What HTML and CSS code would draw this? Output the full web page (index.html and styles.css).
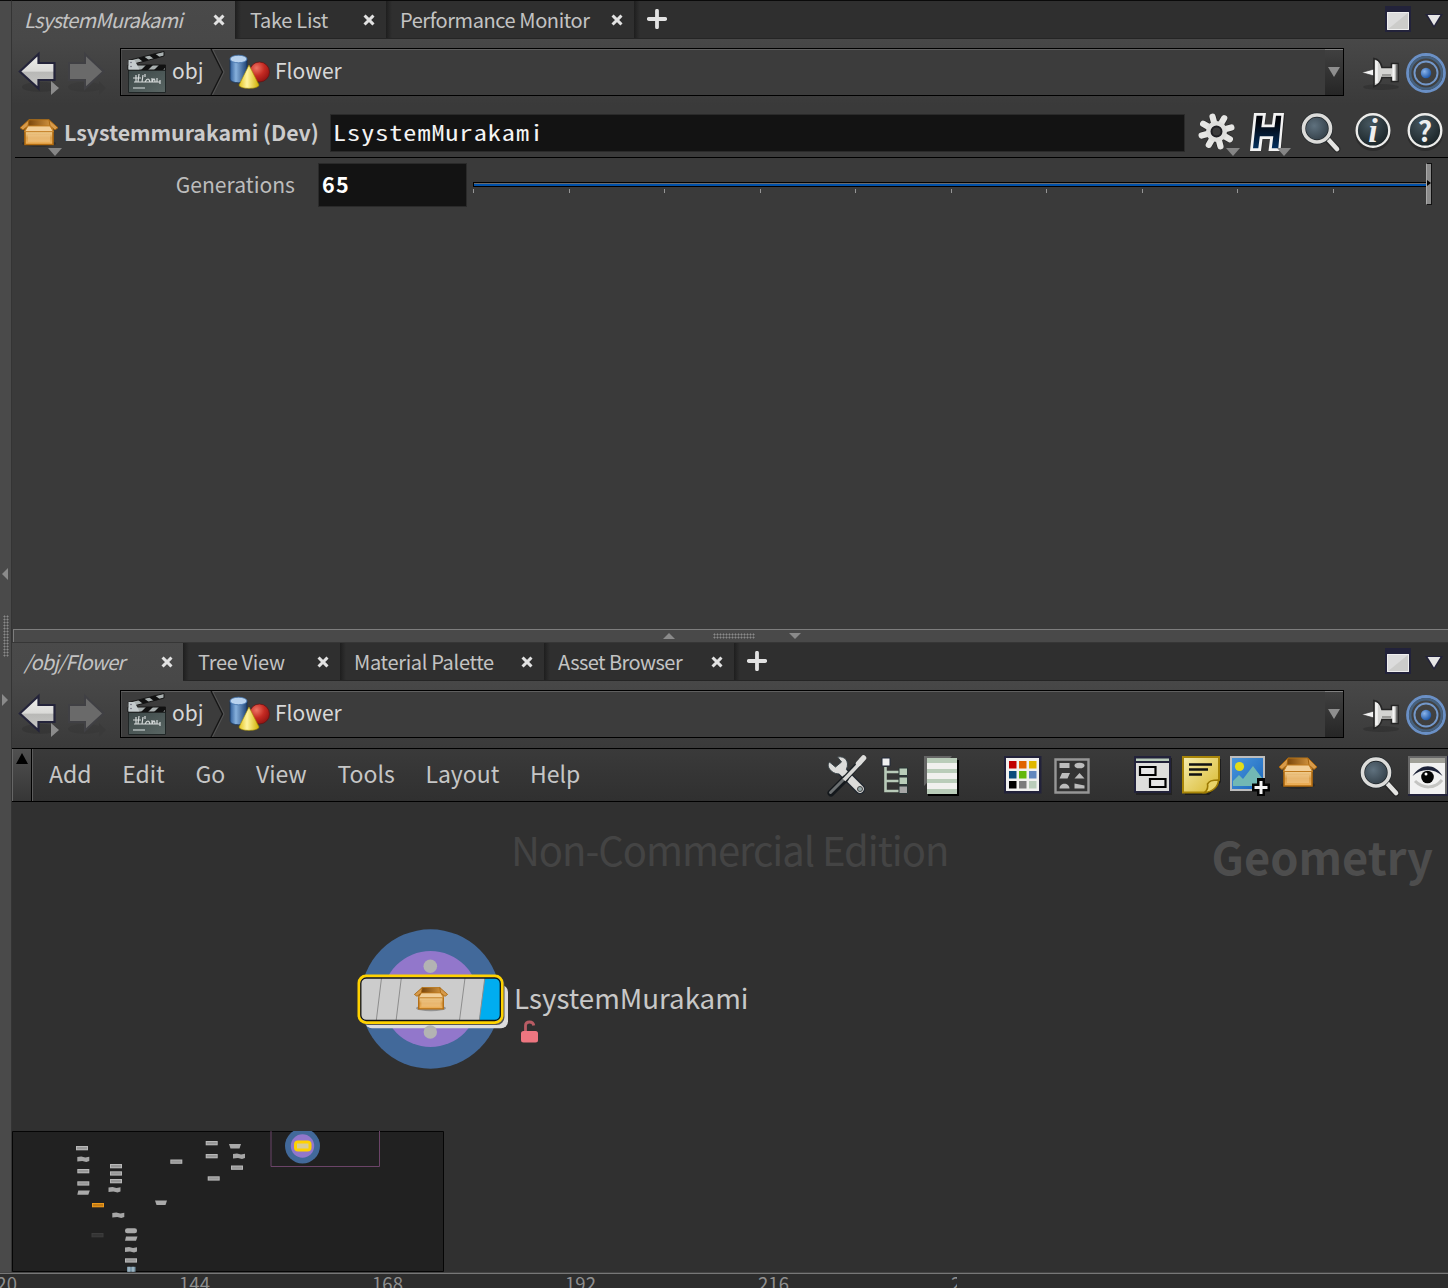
FILE: index.html
```html
<!DOCTYPE html>
<html lang="en">
<head>
<meta charset="utf-8">
<title>Flower - LsystemMurakami</title>
<link rel="stylesheet" href="styles.css">
</head>
<body>
<svg class="defs" aria-hidden="true">
  <defs>
    <linearGradient id="gWhite" x1="0" y1="0" x2="0" y2="1"><stop offset="0" stop-color="#f0f0ec"/><stop offset=".5" stop-color="#dadad8"/><stop offset=".52" stop-color="#b8b8b6"/><stop offset="1" stop-color="#c8c8c6"/></linearGradient>
    <linearGradient id="gBox" x1="0" y1="0" x2="0" y2="1"><stop offset="0" stop-color="#f3d298"/><stop offset=".5" stop-color="#dca04c"/><stop offset="1" stop-color="#efb25a"/></linearGradient>
    <linearGradient id="gIn" x1="0" y1="0" x2="1" y2="0"><stop offset="0" stop-color="#6e3c04"/><stop offset="1" stop-color="#d99a42"/></linearGradient>
    <linearGradient id="gCyl" x1="0" y1="0" x2="1" y2="0"><stop offset="0" stop-color="#2f5d98"/><stop offset=".35" stop-color="#86b0dc"/><stop offset="1" stop-color="#1d4275"/></linearGradient>
    <linearGradient id="gCone" x1="0" y1="0" x2="1" y2="0"><stop offset="0" stop-color="#e2c21c"/><stop offset=".4" stop-color="#fff4a0"/><stop offset="1" stop-color="#cfb000"/></linearGradient>
    <radialGradient id="gBall" cx=".35" cy=".3" r=".8"><stop offset="0" stop-color="#ee7464"/><stop offset=".5" stop-color="#c42a22"/><stop offset="1" stop-color="#8a1010"/></radialGradient>
    <radialGradient id="gLens" cx=".4" cy=".4" r=".7"><stop offset="0" stop-color="#5f717e"/><stop offset="1" stop-color="#2b363e"/></radialGradient>
    <radialGradient id="gDark" cx=".4" cy=".3" r=".8"><stop offset="0" stop-color="#46565e"/><stop offset="1" stop-color="#141d20"/></radialGradient>
    <linearGradient id="gH" x1="0" y1="0" x2="0" y2="1"><stop offset=".2" stop-color="#02050c"/><stop offset="1" stop-color="#04305e"/></linearGradient>
    <radialGradient id="gDot" cx=".35" cy=".35" r=".7"><stop offset="0" stop-color="#8ab4ea"/><stop offset="1" stop-color="#1c56a8"/></radialGradient>
    <linearGradient id="gNote" x1="0" y1="0" x2="1" y2="1"><stop offset="0" stop-color="#f6edb0"/><stop offset="1" stop-color="#d8b82c"/></linearGradient>
    <linearGradient id="gSky" x1="0" y1="0" x2="1" y2="1"><stop offset="0" stop-color="#4a96dc"/><stop offset="1" stop-color="#1a66bc"/></linearGradient>
    <linearGradient id="gBoard" x1="0" y1="0" x2="1" y2="1"><stop offset="0" stop-color="#3c4848"/><stop offset="1" stop-color="#5a6664"/></linearGradient>
  </defs>
  <symbol id="i-close" viewBox="0 0 12 12"><path d="M2.600 2.600l6.800 6.800M9.400 2.600l-6.800 6.800" stroke="#e2e2e2" stroke-width="3" stroke-linecap="square"/></symbol>
  <symbol id="i-plus" viewBox="0 0 20 20"><path d="M10 1.800v16.400M1.800 10h16.400" stroke="#e2e2e2" stroke-width="3.800" stroke-linecap="round"/></symbol>
  <symbol id="i-window" viewBox="0 0 26 26"><path d="M0 0h26v26H0z" fill="#22223a"/><path d="M2 6h22v18H2z" fill="#dcdcdc"/><path d="M2 24L24 6v18z" fill="#ccccca"/><path d="M2.500 6.500h21v17h-21z" fill="none" stroke="#efefef"/></symbol>
  <symbol id="i-menu" viewBox="0 0 20 16"><path d="M1 1h18L10 15z" fill="#22223a"/><path d="M3.600 2h12.800L10 12.500z" fill="#e6e6e6"/></symbol>
  <symbol id="i-back" viewBox="0 0 42 48">
    <ellipse cx="22" cy="37" rx="18" ry="5" fill="#2b2b2b" opacity=".35"/>
    <path d="M1.800 21.500L20.500 4v9H36.500v17H20.500v8.500z" fill="url(#gWhite)" stroke="#24243a" stroke-width="2.200"/>
    <path d="M33 31l8 7-8 7z" fill="#8c8c8c"/></symbol>
  <symbol id="i-forward" viewBox="0 0 42 48">
    <ellipse cx="18" cy="37" rx="17" ry="5" fill="#2b2b2b" opacity=".2"/>
    <path d="M36.500 21.500L18 4v9H2v17h16v8.500z" fill="#6a6a6a" stroke="#404044" stroke-width="2"/>
    <path d="M32 31l7 7-7 7z" fill="#3a3a3a"/></symbol>
  <symbol id="i-clapper" viewBox="0 0 40 44">
    <path d="M1.500 20h37v22.500h-37z" fill="url(#gBoard)" stroke="#202626"/>
    <path d="M1 15h37.500v5H1z" fill="#a9b0b0" stroke="#151515"/>
    <path d="M14 20l5-5h7l-5 5zM27 20l5-5h6v3l-2 2z" fill="#111"/>
    <path d="M1 10.500L37 1.500V6L3 15z" fill="#a9b0b0" stroke="#151515"/>
    <path d="M11 8l5 3.700 6-1.600-5-3.700zM22 5.200l5 3.700 6-1.600-5-3.700z" fill="#111"/>
    <path d="M1.500 10l6 0 5 9.500h-11z" fill="#c4cbcd"/>
    <circle cx="4" cy="12.500" r=".8" fill="#667"/><circle cx="4" cy="16.500" r=".8" fill="#667"/>
    <path d="M6 28h8M7 32h26M9 25v7M12 24l-1 8M16 25l-1 7M18 24v3M18 32c2-4 4-4 5 0M25 28v4c2-5 3-3 3 0M30 28v4M33 30v4" stroke="#d6dada" stroke-width="1.200" fill="none"/>
    <path d="M6 38h12" stroke="#a7b0b0" stroke-width="1.600"/></symbol>
  <symbol id="i-shapes" viewBox="0 0 42 36">
    <path d="M1 5v20c0 5 17 5 17 0V5z" fill="url(#gCyl)" stroke="#173257" stroke-width=".8"/>
    <ellipse cx="9.500" cy="5" rx="8.500" ry="3.800" fill="#b8d2ee" stroke="#3e6ea8" stroke-width=".8"/>
    <circle cx="30.500" cy="18" r="10" fill="url(#gBall)" stroke="#651010" stroke-width=".7"/>
    <path d="M20 11L10 31c0 4.500 20 4.500 20 0z" fill="url(#gCone)" stroke="#a08a00" stroke-width=".6"/></symbol>
  <symbol id="i-pin" viewBox="0 0 40 36">
    <ellipse cx="21" cy="30" rx="18" ry="3" fill="#222" opacity=".35"/>
    <path d="M1.500 15.500L14 12v7z" fill="#f2f2f2" stroke="#333" stroke-width=".7"/>
    <path d="M14 1.500c5 1 7 4 8 9h9.500V6.500H38v18h-6.500v-4H22c-1 5-3 7-8 9z" fill="#d4d4d2" stroke="#252525" stroke-width="1.600"/>
    <path d="M16.500 4v22" stroke="#f2f2f2" stroke-width="2.600"/><path d="M22 18h9" stroke="#9a9a98" stroke-width="2"/>
    <path d="M33.500 7.500v16" stroke="#f6f6f6" stroke-width="2"/><path d="M36.500 7v17" stroke="#707070" stroke-width="1.600"/></symbol>
  <symbol id="i-target" viewBox="0 0 42 42">
    <circle cx="21" cy="21" r="18.500" fill="none" stroke="#6a90c6" stroke-width="2.800"/><circle cx="21" cy="21" r="15.800" fill="none" stroke="#46617f" stroke-width="2.400"/>
    <circle cx="21" cy="21" r="11.500" fill="none" stroke="#7398cb" stroke-width="1.900"/>
    <circle cx="21" cy="21" r="5.200" fill="url(#gDot)"/></symbol>
  <symbol id="i-box" viewBox="0 0 40 34" preserveAspectRatio="none">
    <ellipse cx="20" cy="29" rx="17" ry="4" fill="#111" opacity=".3"/>
    <path d="M10 2h20l4 6v8H6V8z" fill="url(#gIn)" stroke="#b87416"/>
    <path d="M6 15h28v15H6z" fill="url(#gBox)" stroke="#b36c10" stroke-width="1.600"/>
    <path d="M9 19h22v8H9z" fill="#f0c88c" opacity=".55"/>
    <path d="M10 2L1 11l3 2.500 5-4.500zM30 2l9 9-3 2.500-5-4.500z" fill="#d79a4a" stroke="#a5640e"/>
    <path d="M9 9h22l3.500 6.500h-29z" fill="#f2cf98" stroke="#c07a1c"/></symbol>
  <symbol id="i-drop" viewBox="0 0 14 8"><path d="M0 0h14L7 8z" fill="#858585"/></symbol>
  <symbol id="i-gear" viewBox="0 0 40 40">
    <g transform="translate(19.500 20.500)"><g stroke="#1d1d1d" stroke-width="8" stroke-linecap="round" opacity=".5"><path d="M0 0v-14M0 0l9.900-9.900M0 0h14M0 0l9.900 9.900M0 0v14M0 0l-9.900 9.900M0 0h-14M0 0l-9.900-9.900" transform="rotate(-15)"/></g>
    <g stroke="#e6e6e4" stroke-width="6.200" stroke-linecap="round"><path d="M0 0v-15.400M0 0l10.900-10.900M0 0h15.400M0 0l10.900 10.900M0 0v15.400M0 0l-10.900 10.900M0 0h-15.400M0 0l-10.900-10.900" transform="rotate(-15)"/></g>
    <circle r="10.500" fill="#dededc"/><circle r="5" fill="#3b3b3b" stroke="#1e1e22" stroke-width="2"/></g></symbol>
  <symbol id="i-houdini" viewBox="0 0 38 42">
    <path d="M8 5h10l-1 12h9l1-12h10l-4 36H23l1-12h-9l-1 12H3z" fill="#151515" opacity=".5"/>
    <path d="M6 3h12l-1.500 11.500h7.500L25.500 3H36l-3.500 38H20.500l1.500-12h-7.500L13 41H2z" fill="#f3f3f3"/>
    <path d="M8.500 5.800h6.300l-1.500 11.500h13.200l1.500-11.500h5.300l-3 32.400h-6.500l1.500-12H11.800l-1.500 12H5z" fill="url(#gH)"/></symbol>
  <symbol id="i-search" viewBox="0 0 40 41">
    <path d="M26 27l10 10" stroke="#1e1e1e" stroke-width="7" stroke-linecap="round" opacity=".5"/>
    <path d="M26 26l10 11" stroke="#e4e4e2" stroke-width="4.600" stroke-linecap="round"/>
    <circle cx="16" cy="16.500" r="13.500" fill="url(#gLens)" stroke="#20262a" stroke-width="5"/>
    <circle cx="16" cy="16.500" r="13.500" fill="none" stroke="#dcdcda" stroke-width="3.600"/></symbol>
  <symbol id="i-disc" viewBox="0 0 40 42">
    <ellipse cx="20" cy="24" rx="18" ry="17" fill="#1a1a1a" opacity=".4"/>
    <circle cx="20" cy="20.500" r="16.300" fill="url(#gDark)" stroke="#ececea" stroke-width="2.400"/></symbol>
  <symbol id="i-tools" viewBox="0 0 40 42">
    <path d="M14 15l19 19" stroke="#222830" stroke-width="10.500" stroke-linecap="round"/>
    <path d="M10.500 2c8-1.500 12 5 9 12-4 7-13 6-17 0-2-3-1.500-5 0-7l6 5 6-5z" fill="#dcdcda" stroke="#3a4448"/>
    <path d="M13 14l20 20" stroke="#dcdcda" stroke-width="7.500" stroke-linecap="round"/>
    <circle cx="33" cy="34" r="2.500" fill="#9aa" stroke="#444"/>
    <path d="M18 24L4 38" stroke="#14181c" stroke-width="7" stroke-linecap="round"/><path d="M17 24L3.500 37.500" stroke="#6c7072" stroke-width="3" stroke-linecap="round"/>
    <path d="M18 24L34 6" stroke="#1e2428" stroke-width="6"/><path d="M17 25L34 7" stroke="#d8d8d6" stroke-width="3.600"/><path d="M31.500 8.500l5-5.500" stroke="#dededc" stroke-width="5.500" stroke-linecap="round"/></symbol>
  <symbol id="i-tree" viewBox="0 0 28 38">
    <path d="M4.500 10v24h14M4.500 15h14M4.500 24h14" fill="none" stroke="#b8cab8" stroke-width="2.600"/>
    <path d="M1 1h8v8H1z" fill="#f0f0f0" stroke="#202838"/>
    <path d="M18 11h8.500v7.500H18zM18 20h8.500v7.500H18z" fill="#b8cdb9" stroke="#283434"/><path d="M18 29h8.500v7.500H18z" fill="#a6a6a6" stroke="#283434"/></symbol>
  <symbol id="i-list" viewBox="0 0 36 40">
    <path d="M0 0h28L0 30z" fill="#666"/><path d="M4 4h31v36H4z" fill="#000"/>
    <path d="M3 2h30v36H3z" fill="#f0f0ee"/><path d="M3 2h30v5H3zM3 13h30v4H3zM3 23h30v4H3zM3 33h30v5H3z" fill="#b9ccb9"/></symbol>
  <symbol id="i-palette" viewBox="0 0 38 38">
    <path d="M0 0h37.500v37.500H0z" fill="#22223a"/><path d="M2 2h33v33H2z" fill="#f1f1ef"/>
    <path d="M5 5h7.500v7.500H5z" fill="#c00000"/><path d="M15 5h7.500v7.500H15z" fill="#e06400"/><path d="M25 5h7.500v7.500H25z" fill="#e0b800"/>
    <path d="M5 15h7.500v7.500H5z" fill="#0b4a7c"/><path d="M15 15h7.500v7.500H15z" fill="#64b80c"/><path d="M25 15h7.500v7.500H25z" fill="#6288be"/>
    <path d="M5 25h7.500v7.500H5z" fill="#000"/><path d="M15 25h7.500v7.500H15z" fill="#7c7c7c"/><path d="M25 25h7.500v7.500H25z" fill="#b9ccb9"/></symbol>
  <symbol id="i-forms" viewBox="0 0 36 36">
    <path d="M1.500 1.500h33v33h-33z" fill="#333" stroke="#969696" stroke-width="2.400"/>
    <path d="M5.500 5h10v5h-10zM8 15h8l-2.500 5.500H5.500zM25.500 15l5 5.500h-10z" fill="#bcbcbc"/><ellipse cx="25.500" cy="7.500" rx="5" ry="2.800" fill="#bcbcbc"/>
    <path d="M5.500 30.500c0-6.500 10-6.500 10 0zM20.500 25.500l10 2v3h-10z" fill="#bcbcbc"/></symbol>
  <symbol id="i-netbox" viewBox="0 0 38 39">
    <path d="M2 2h36v37H2z" fill="#222"/><path d="M0 0h37v37H0z" fill="#22223a"/><path d="M2 2.500h33v2.500H2z" fill="#b9ccb9"/><path d="M2 7h33v28H2z" fill="#dededc"/>
    <path d="M6 11h15.500v8H6zM16 23h15.500v8H16z" fill="#e6e6e6" stroke="#000" stroke-width="2.200"/></symbol>
  <symbol id="i-note" viewBox="0 0 40 40">
    <path d="M3 3h36v23L27 39H3z" fill="#1e1e1e"/><path d="M1 1h36v23L24 36.500H1z" fill="url(#gNote)" stroke="#a88508" stroke-width="2"/>
    <path d="M36.500 24c-7 0-9 1-11 4 1 4 0 6-3 8.500 8-.5 14-6 14-12.500z" fill="#ead468" stroke="#9c7a04" stroke-width="1.600"/>
    <path d="M7 8.500h23M7 13.500h19M7 18.500h13" stroke="#111" stroke-width="2.300"/></symbol>
  <symbol id="i-image" viewBox="0 0 40 40">
    <path d="M0 0h35v35H0z" fill="#bdbdbd"/><path d="M2 2h31v31H2z" fill="url(#gSky)"/>
    <circle cx="9.500" cy="10.500" r="4.600" fill="#e4dc18"/><path d="M3 25l6-6 4 4 10-13 9 12v8H3z" fill="#72b8b4"/>
    <path d="M27 22h8v5.500h5v8h-5V40h-8v-4.500h-5v-8h5z" fill="#050505"/><path d="M31 25v13M24.500 31.500h13" stroke="#f4f4f4" stroke-width="3"/></symbol>
  <symbol id="i-eye" viewBox="0 0 40 40">
    <path d="M0 0h40v40H0z" fill="#22223a"/><path d="M0 0h39v38H0z" fill="#686868"/><path d="M2 2h35v36H2z" fill="#f1f1f1"/><path d="M2 2h35v5H2z" fill="#a0a098"/>
    <path d="M7 25c8 8 20 8 27-1" fill="none" stroke="#c4c4c2" stroke-width="3"/>
    <path d="M4.500 20C13 7 27 7 34.500 20 26 12 13 12 4.500 20z" fill="#1c2238"/><circle cx="19.500" cy="21" r="6.300" fill="#050505"/><circle cx="18" cy="18" r="1.500" fill="#fff"/></symbol>
</svg>

<div class="app">
  <div class="main">
    <aside class="rail"><i class="rail-left"></i><i class="rail-grip"></i><i class="rail-right"></i></aside>
    <div class="workspace">

      <section class="pane pane-params">
        <nav class="tabs">
          <div class="tab active tab-node"><span class="t">LsystemMurakami</span><svg class="x"><use href="#i-close"/></svg></div>
          <div class="tab tab-takes"><span class="t">Take List</span><svg class="x"><use href="#i-close"/></svg></div>
          <div class="tab tab-perf"><span class="t">Performance Monitor</span><svg class="x"><use href="#i-close"/></svg></div>
          <div class="tab-add"><svg class="plus"><use href="#i-plus"/></svg></div>
          <div class="tab-tools"><svg class="win"><use href="#i-window"/></svg><svg class="tri"><use href="#i-menu"/></svg></div>
        </nav>
        <div class="pathbar">
          <svg class="nav-arrow"><use href="#i-back"/></svg><svg class="nav-arrow fwd"><use href="#i-forward"/></svg>
          <div class="path">
            <svg class="clapper"><use href="#i-clapper"/></svg><span class="t crumb obj">obj</span>
            <svg class="sep" viewBox="0 0 16 46"><path d="M2 0l11.500 23L2 46" fill="none" stroke="#161616" stroke-width="1.400"/><path d="M3.500 0L15 23 3.500 46" fill="none" stroke="#555"/></svg>
            <svg class="shapes"><use href="#i-shapes"/></svg><span class="t crumb">Flower</span>
            <div class="path-drop"><i></i></div>
          </div>
          <svg class="pin"><use href="#i-pin"/></svg><svg class="target"><use href="#i-target"/></svg>
        </div>
        <header class="node-head">
          <div class="badge-wrap node-icon"><svg class="box"><use href="#i-box"/></svg><svg class="drop"><use href="#i-drop"/></svg></div>
          <span class="t node-type">Lsystemmurakami (Dev)</span>
          <div class="name-field"><span class="t">LsystemMurakami</span></div>
          <div class="badge-wrap gear"><svg class="i40"><use href="#i-gear"/></svg><svg class="drop"><use href="#i-drop"/></svg></div>
          <div class="badge-wrap hou"><svg class="ih"><use href="#i-houdini"/></svg><svg class="drop"><use href="#i-drop"/></svg></div>
          <svg class="search"><use href="#i-search"/></svg>
          <div class="disc info"><svg><use href="#i-disc"/></svg><b>i</b></div>
          <div class="disc help"><svg><use href="#i-disc"/></svg><b>?</b></div>
        </header>
        <div class="param">
          <label class="t">Generations</label>
          <div class="num"><span class="t">65</span></div>
          <div class="slider"><div class="track"></div><div class="ticks"><i></i><i></i><i></i><i></i><i></i><i></i><i></i><i></i><i></i><i></i><i class="end"></i></div><div class="handle"><i></i></div></div>
        </div>
      </section>

      <div class="splitter"><i class="up"></i><i class="grip"></i><i class="down"></i></div>

      <section class="pane pane-network">
        <nav class="tabs">
          <div class="tab active tab-path"><span class="t">/obj/Flower</span><svg class="x"><use href="#i-close"/></svg></div>
          <div class="tab tab-tree"><span class="t">Tree View</span><svg class="x"><use href="#i-close"/></svg></div>
          <div class="tab tab-mat"><span class="t">Material Palette</span><svg class="x"><use href="#i-close"/></svg></div>
          <div class="tab tab-asset"><span class="t">Asset Browser</span><svg class="x"><use href="#i-close"/></svg></div>
          <div class="tab-add"><svg class="plus"><use href="#i-plus"/></svg></div>
          <div class="tab-tools"><svg class="win"><use href="#i-window"/></svg><svg class="tri"><use href="#i-menu"/></svg></div>
        </nav>
        <div class="pathbar">
          <svg class="nav-arrow"><use href="#i-back"/></svg><svg class="nav-arrow fwd"><use href="#i-forward"/></svg>
          <div class="path">
            <svg class="clapper"><use href="#i-clapper"/></svg><span class="t crumb obj">obj</span>
            <svg class="sep" viewBox="0 0 16 46"><path d="M2 0l11.500 23L2 46" fill="none" stroke="#161616" stroke-width="1.400"/><path d="M3.500 0L15 23 3.500 46" fill="none" stroke="#555"/></svg>
            <svg class="shapes"><use href="#i-shapes"/></svg><span class="t crumb">Flower</span>
            <div class="path-drop"><i></i></div>
          </div>
          <svg class="pin"><use href="#i-pin"/></svg><svg class="target"><use href="#i-target"/></svg>
        </div>
        <div class="menubar">
          <div class="collapse"><i></i></div>
          <div class="menus"><span class="t">Add</span><span class="t">Edit</span><span class="t">Go</span><span class="t">View</span><span class="t">Tools</span><span class="t">Layout</span><span class="t">Help</span></div>
          <div class="tools">
            <svg class="k-tools"><use href="#i-tools"/></svg>
            <svg class="k-tree"><use href="#i-tree"/></svg>
            <svg class="k-list"><use href="#i-list"/></svg>
            <svg class="k-palette"><use href="#i-palette"/></svg>
            <svg class="k-forms"><use href="#i-forms"/></svg>
            <svg class="k-netbox"><use href="#i-netbox"/></svg>
            <svg class="k-note"><use href="#i-note"/></svg>
            <svg class="k-image"><use href="#i-image"/></svg>
            <svg class="k-box"><use href="#i-box"/></svg>
            <svg class="k-search"><use href="#i-search"/></svg>
            <svg class="k-eye"><use href="#i-eye"/></svg>
          </div>
        </div>
        <div class="canvas">
          <div class="t edition">Non-Commercial Edition</div>
          <div class="t context">Geometry</div>
          <svg class="node" viewBox="0 0 166 144">
            <circle cx="75.500" cy="72" r="69.700" fill="#42699a"/><circle cx="75.500" cy="72" r="48" fill="#9277cb"/>
            <circle cx="75.300" cy="39.300" r="6.800" fill="#b3b3b3"/>
            <rect x="10" y="58" width="143" height="43.300" rx="7" fill="#dcdcdc"/>
            <rect x="5" y="50" width="144.500" height="48" rx="8" fill="#555"/>
            <rect x="4" y="49" width="143" height="46.500" rx="7" fill="#ccc" stroke="#ffd200" stroke-width="3"/>
            <path d="M129.800 51h11.200q4.500 0 4.500 4.500v33q0 5-5 5h-16.300z" fill="#00adf0"/>
            <path d="M26.500 51l-5.200 42.500M46.300 51l-5.200 42.500M110 51l-5.500 42.500M129.800 51l-5.500 42.500" stroke="#8d8d8d" fill="none"/>
            <rect x="5.800" y="51" width="139.500" height="42.500" rx="5.500" fill="none" stroke="#111" stroke-width="1.300"/>
            <use href="#i-box" x="58.500" y="59" width="35" height="26"/>
            <circle cx="75.300" cy="105" r="6.700" fill="#b3b3b3"/>
          </svg>
          <div class="t node-label">LsystemMurakami</div>
          <svg class="lock" viewBox="0 0 20 24"><path d="M5.500 12V5.500q0-3.500 4-3.500 3.800 0 4.300 3.500" fill="none" stroke="#b95c64" stroke-width="2.800"/><rect x="1" y="11" width="17" height="11.500" rx="2.500" fill="#ed7680"/></svg>
          <svg class="minimap" viewBox="0 0 432 141">
            <path d="M.5.5h431v140H.5z" fill="#212121" stroke="#050505"/>
            <path d="M259 0v35.500h108.500V0" fill="none" stroke="#6b4468"/>
            <circle cx="290.500" cy="15" r="17.500" fill="#42699a"/><circle cx="290.500" cy="15" r="11.700" fill="#9277cb"/><rect x="282" y="9.500" width="17.500" height="11" rx="4" fill="#ffd200"/><rect x="285" y="12.500" width="11.500" height="5" fill="#d8cc98"/>
            <g id="mini-nodes"></g>
          </svg>
        </div>
      </section>
    </div>
  </div>
  <footer class="timeline"><span>120</span><span>144</span><span>168</span><span>192</span><span>216</span><span class="cut">2</span></footer>
</div>
<script src="map.js"></script>
</body>
</html>
```
FILE: map.js
```js
// Overview nodes: shape, centre x, centre y, optional fills
const nodes = [
  ["rect", 70, 17], ["wave", 71.3, 28], ["rect", 71.3, 40], ["rect", 71.3, 52.3], ["slant", 71.3, 61.5],
  ["rect", 104, 35], ["rect", 104, 42.3], ["rect", 104, 50], ["wave", 102.5, 58.5],
  ["rect", 86, 74, "#ee9a1c", "#c47c14"], ["rect", 85.5, 104, "#3c3c3c", "#343434"], ["wave", 106.3, 84],
  ["round", 119, 99.5], ["slant", 119, 107.5], ["wave", 119, 118.5], ["rect", 119, 129.3], ["blue", 119, 138.3],
  ["rect", 164.3, 30.5], ["trap", 149, 71.5], ["rect", 199.7, 12], ["rect", 199.7, 25], ["rect", 201.7, 47.3],
  ["trap", 223, 15], ["wave", 227, 25], ["rect", 225, 36.5]
];
const paint = {
  rect: (x, y, a = "#b8b8b8", b = "#989898") => `<rect x="${x - 6}" y="${y - 2}" width="12" height="4.300" fill="${a}"/><rect x="${x - 5}" y="${y - 1}" width="10" height="2.300" fill="${b}"/>`,
  round: (x, y) => `<rect x="${x - 6}" y="${y - 2.300}" width="12" height="5" rx="2.300" fill="#aaa"/>`,
  blue: (x, y) => `<rect x="${x - 4}" y="${y - 2.500}" width="8.500" height="5" fill="#7b97a8"/><path d="M${x - 2} ${y - 2.500}v5M${x + 2} ${y - 2.500}v5" stroke="#b8cdd6"/>`,
  wave: (x, y) => `<path d="M${x - 6} ${y - 2}l4-.6 4 1 4-.6v4.300l-3 .8-4-1-5 .5z" fill="#a6a6a6"/>`,
  slant: (x, y) => `<path d="M${x - 5} ${y - 2}h11.500l-1.500 4.300H${x - 6}z" fill="#aaa"/>`,
  trap: (x, y) => `<path d="M${x - 6} ${y - 2}h12l-1.500 4.500h-9z" fill="#aaa"/>`
};
document.getElementById("mini-nodes").innerHTML = nodes.map(([k, ...r]) => paint[k](...r)).join("");
```
FILE: styles.css
```css
* { box-sizing: border-box; }
body { margin: 0; background: #3a3a3a; font-family: "Noto Sans CJK SC", "Noto Sans", sans-serif; color: #ccc; }
svg { display: block; flex: none; }
.defs { width: 0; height: 0; position: absolute; }
.t { white-space: nowrap; }
.app { width: 1448px; height: 1288px; display: flex; flex-direction: column; overflow: hidden; }
.main { display: flex; height: 1272px; flex: none; }

.rail { width: 12px; flex: none; background: #4a4a4a; border-top: 1px solid #0a0a0a; border-right: 1px solid #343434; display: flex; flex-direction: column; align-items: flex-start; padding: 567px 0 0 2px; }
.rail-left { border: 6px solid transparent; border-left: 0; border-right-color: #8a8a8a; }
.rail-grip { width: 6px; height: 42px; margin: 35px 0 0 1px; background: radial-gradient(circle, #8a8a8a .9px, transparent 1.100px) 0 0 / 3px 3px; }
.rail-right { border: 6px solid transparent; border-right: 0; border-left-color: #8a8a8a; margin-top: 37px; }

.workspace { width: 1436px; flex: none; display: flex; flex-direction: column; }
.pane { display: flex; flex-direction: column; background: linear-gradient(#4a4a4a 0, #484848 38px, #3a3a3a 105px); }
.pane-params { height: 629px; }
.pane-network { height: 630px; }
.tabs { display: flex; height: 39px; flex: none; border-top: 1px solid #0a0a0a; align-items: stretch; }
.pane-network .tabs { border-top-color: #363636; }
.tab { display: flex; align-items: center; justify-content: space-between; padding: 0 11px 0 14px; font-size: 20px; letter-spacing: -.42px; line-height: 38px; color: #c3c3c3; flex: none; }
.tab, .tab-add { background: linear-gradient(90deg, #1e1e1e, #272727 3px, transparent 6px), #2f2f2f; border-bottom: 1px solid #252525; }
.tab.active { background: none; border: 0; font-style: italic; padding: 0 10px 0 12px; letter-spacing: -.75px; }
.tab-node { width: 223px; }
.tab-takes { width: 151px; }
.tab-perf { width: 248px; }
.tab-path { width: 171px; }
.tab-tree { width: 157px; }
.tab.tab-takes, .tab.tab-tree { padding-left: 15px; letter-spacing: -.3px; }
.tab-mat { width: 204px; }
.tab.tab-mat { letter-spacing: -.33px; }
.tab-asset { width: 190px; }
.tab.tab-asset { letter-spacing: -.55px; }
.x { width: 12px; height: 12px; }
.tab-add { flex: 1; padding: 8px 0 0 13px; }
.plus { width: 20px; height: 20px; }
.tab-tools { display: flex; gap: 13px; width: 63px; padding-top: 5px; flex: none; background: #2f2f2f; border-bottom: 1px solid #252525; }
.win { width: 26px; height: 26px; }
.tri { width: 20px; height: 16px; margin-top: 7px; }

.pathbar { height: 66px; flex: none; display: flex; align-items: flex-start; padding: 9px 0 0 6px; }
.nav-arrow { width: 42px; height: 48px; margin-top: 2px; }
.fwd { margin-left: 7px; }
.path { width: 1224px; height: 48px; margin-left: 11px; flex: none; border: 1px solid #000; box-shadow: inset 0 1px #606060, inset 1px 0 #4c4c4c; display: flex; align-items: center; background: #3c3c3c; }
.clapper { width: 40px; height: 44px; margin-left: 6px; }
.crumb { font-size: 21px; line-height: 42px; color: #d8d8d8; margin-left: 5px; padding-bottom: 5px; }
.obj { width: 37px; }
.sep { width: 16px; height: 46px; }
.shapes { width: 42px; height: 36px; margin-left: 4px; }
.shapes + .crumb { margin-left: 4px; }
.path-drop { width: 18px; height: 46px; margin-left: auto; background: linear-gradient(#404040, #262626); border-top: 1px solid #808080; display: grid; place-items: center; }
.path-drop i { border: 6px solid transparent; border-top: 10px solid #8e8e8e; border-bottom: 0; margin-bottom: 1px; }
.pin { width: 40px; height: 36px; margin: 9px 0 0 16px; }
.target { width: 42px; height: 42px; margin: 4px 0 0 5px; }

.node-head { height: 53px; flex: none; margin-left: 3px; padding-left: 4px; display: flex; align-items: center; border-bottom: 1px solid #000; }
.badge-wrap { position: relative; flex: none; }
.drop { position: absolute; width: 14px; height: 8px; }
.box { width: 40px; height: 30px; }
.node-icon { padding-top: 4px; }
.node-icon .drop { left: 29px; top: 34px; }
.node-type { font-size: 21.300px; font-weight: 700; margin-left: 5px; width: 266px; color: #ccc; line-height: 30px; padding-top: 2px; }
.name-field { width: 855px; height: 38px; margin-top: 3px; background: #131313; border: 1px solid #2a2a2a; flex: none; padding-left: 2px; line-height: 34px; font-size: 21px; color: #f4f4f4; font-family: "Noto Sans Mono CJK SC", "DejaVu Sans Mono", monospace; }
.name-field .t { display: inline-block; letter-spacing: .8px; transform: scaleX(1.245); transform-origin: 0 50%; }
.gear { margin-left: 12px; }
.i40 { width: 40px; height: 40px; }
.gear .drop { left: 29px; top: 37px; }
.hou { margin-left: 11px; }
.ih { width: 38px; height: 42px; }
.hou .drop { left: 29px; top: 38px; }
.search { width: 40px; height: 41px; margin: 2px 0 0 15px; }
.disc { position: relative; width: 40px; height: 42px; flex: none; margin-left: 12px; }
.disc svg { width: 40px; height: 42px; }
.disc b { position: absolute; inset: 0 0 2px; text-align: center; line-height: 41px; color: #eee; font-size: 28px; }
.info b { font: italic 700 34px/41px "Liberation Serif", serif; }

.param { display: flex; height: 54px; padding-top: 5px; flex: none; }
.param label { width: 283px; text-align: right; font-size: 21.100px; line-height: 42px; color: #bdbdbd; }
.num { width: 149px; height: 44px; margin-left: 23px; border: 1px solid #2a2a2a; background: #131313; color: #fff; font-weight: 700; font-size: 21.500px; letter-spacing: 1.300px; line-height: 40px; padding-left: 3px; }
.slider { position: relative; width: 959px; margin-left: 6px; padding-top: 19px; }
.track { width: 955px; height: 5px; border: 1px solid #000; background: linear-gradient(#6a6a6a 1px, #0050a8 1px); }
.ticks { display: flex; justify-content: space-between; margin-top: 2px; width: 956px; }
.ticks i { width: 1px; height: 4px; background: #959595; }
.ticks .end { background: none; }
.handle { position: absolute; right: 0; top: 0; width: 6px; height: 42px; background: #8a8a8a; border: 1px solid #111; border-left-color: #aaa; padding-top: 16px; }
.handle i { display: block; border: 3px solid transparent; border-left: 4px solid #000; border-right: 0; }

.splitter { height: 13px; flex: none; margin-left: 1px; border-top: 1px solid #7d7d7d; border-left: 1px solid #7d7d7d; background: #494949; display: flex; align-items: center; padding-left: 649px; }
.up { border: 6px solid transparent; border-bottom: 6px solid #8a8a8a; border-top: 0; }
.down { border: 6px solid transparent; border-top: 6px solid #8a8a8a; border-bottom: 0; margin-left: 34px; }
.grip { width: 42px; height: 6px; margin-left: 38px; background: radial-gradient(circle, #8a8a8a .9px, transparent 1.100px) 0 0 / 3px 3px; }

.menubar { height: 54px; flex: none; margin-top: 1px; border: 1px solid #000; border-width: 1px 0; display: flex; background: linear-gradient(#3a3a3a, #303030); }
.collapse { width: 20px; border-right: 1px solid #000; border-left: 1px solid #666; background: linear-gradient(#505050, #363636); display: grid; justify-items: center; padding-top: 4px; box-shadow: 1px 0 #5c5c5c; }
.collapse i { height: 0; border: 6px solid transparent; border-bottom: 11px solid #000; border-top: 0; }
.menus { display: flex; gap: 30.700px; margin-left: 17px; font-size: 23px; line-height: 49px; color: #c6c6c6; }
.tools { margin-left: auto; display: flex; padding-top: 7px; flex: none; }
.k-tools { width: 40px; height: 42px; margin-top: -1px; }
.k-tree { width: 28px; height: 38px; margin: 1px 0 0 14px; }
.k-list { width: 36px; height: 40px; margin-left: 15px; }
.k-palette { width: 38px; height: 38px; margin-left: 44px; }
.k-forms { width: 36px; height: 36px; margin: 2px 0 0 12px; }
.k-netbox { width: 38px; height: 39px; margin-left: 44px; }
.k-note { width: 40px; height: 40px; margin-left: 10px; }
.k-image { width: 40px; height: 40px; margin-left: 8px; }
.k-box { width: 40px; height: 34px; margin-left: 8px; }
.k-search { width: 40px; height: 41px; margin-left: 42px; }
.k-eye { width: 40px; height: 40px; margin-left: 8px; }

.canvas { position: relative; flex: 1; background: #303030; }
.canvas > * { position: absolute; }
.edition { left: 499px; top: 18px; font-size: 40px; letter-spacing: -1.050px; line-height: 58px; color: #444; }
.context { right: 15px; top: 21px; font-size: 45.200px; font-weight: 700; line-height: 66px; color: #4d4d4d; }
.node { left: 343px; top: 125px; width: 166px; height: 144px; }
.node-label { left: 502px; top: 175px; font-size: 27.700px; line-height: 40px; color: #c8c8c8; }
.lock { left: 508px; top: 218px; width: 20px; height: 24px; }
.minimap { left: 0; bottom: 0; width: 432px; height: 141px; }

.timeline { height: 16px; flex: none; background: #2d2d2d; border-top: 1px solid #444; box-shadow: inset 0 1px #777; display: flex; font-size: 18.500px; line-height: 20px; color: #8f8f8f; overflow: hidden; }
.timeline span { width: 193px; flex: none; text-align: center; }
.timeline span:first-child { margin-left: -95px; }
.timeline .cut { width: 6px; overflow: hidden; text-align: left; margin-left: 81px; }
```
